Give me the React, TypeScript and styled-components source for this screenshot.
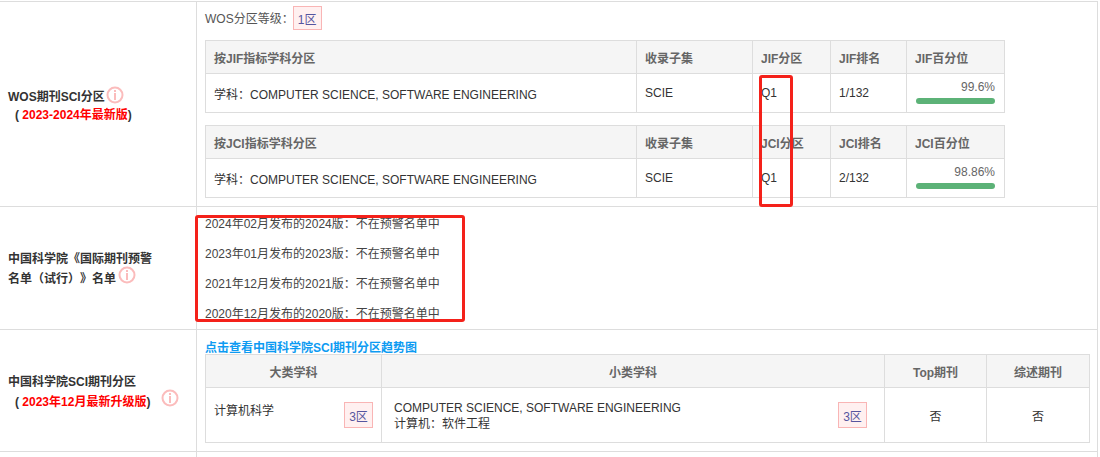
import React from "react";
import styled, { createGlobalStyle } from "styled-components";

const GlobalStyle = createGlobalStyle`
  html, body {
    margin: 0;
    padding: 0;
    background: #fff;
    overflow: hidden;
  }
  body {
    font-family: "Liberation Sans", "Noto Sans CJK SC", sans-serif;
    font-size: 12px;
    color: #333;
    text-spacing-trim: space-all;
  }
`;

const Page = styled.div`
  position: relative;
  width: 1100px;
  height: 457px;
  overflow: hidden;
  padding-top: 1px;
  box-sizing: border-box;
`;

const OuterTable = styled.table`
  width: 1099px;
  margin-left: -1px;
  border-collapse: collapse;
  table-layout: fixed;
  td {
    border: 1px solid #ddd;
  }
`;

const Row = styled.tr<{ h: number }>`
  height: ${({ h }) => h}px;
`;

const LabelCell = styled.td`
  box-sizing: border-box;
  padding: 2px 8px 0;
  font-weight: bold;
  line-height: 18px;
  color: #333;
  vertical-align: middle;
`;

const ContentCell = styled.td`
  padding: 0 8px;
  vertical-align: top;
`;

const Red = styled.span`
  color: #f00;
`;

const Indent = styled.span`
  padding-left: 7px;
`;

const Info = styled.svg<{ gap: number; lift: number }>`
  width: 18px;
  height: 18px;
  vertical-align: -3px;
  margin-left: ${({ gap }) => gap}px;
  transform: translateY(${({ lift }) => -lift}px);
`;

const InfoIcon = ({ gap, lift = 0 }: { gap: number; lift?: number }) => (
  <Info gap={gap} lift={lift} viewBox="0 0 18 18">
    <circle cx="9" cy="9" r="7.5" fill="none" stroke="#fbbcbc" strokeWidth="2" />
    <rect x="8" y="4" width="2" height="2" fill="#fbbcbc" />
    <rect x="8" y="7" width="2" height="7" fill="#fbbcbc" />
  </Info>
);

const GradeLine = styled.div`
  display: flex;
  align-items: center;
  height: 24px;
  margin-top: 4px;
  color: #555;
`;

const GradeLabel = styled.span`
  margin-top: -2px;
`;

const Tag = styled.span`
  display: inline-flex;
  align-items: center;
  justify-content: center;
  box-sizing: border-box;
  width: 29px;
  height: 26px;
  background: #fff0f0;
  border: 1px solid #f9b5b5;
  color: #55559f;
  flex: none;
`;

const GradeTag = styled(Tag)`
  margin-left: -1px;
  height: 24px;
`;

const DataTable = styled.table<{ mt: number; w: number; rowH: number }>`
  width: ${({ w }) => w}px;
  margin-top: ${({ mt }) => mt}px;
  border-collapse: collapse;
  table-layout: fixed;
  && td, && th {
    border: 1px solid #ddd;
    padding: 0 8px;
  }
  && th {
    height: 32px;
    background: #f5f5f5;
    color: #666;
    font-weight: bold;
    text-align: left;
  }
  && td {
    height: ${({ rowH }) => rowH}px;
    color: #333;
  }
`;

const CenterTh = styled.th`
  &&& {
    text-align: center;
  }
`;

const CenterTd = styled.td`
  text-align: center;
`;

const SubjectCell = styled.td`
  &&& {
    padding: 0 17px 0 12px;
  }
`;

const Percent = styled.div`
  text-align: right;
  color: #666;
  line-height: 14px;
  margin: -3px 1px 0 0;
`;

const Bar = styled.div`
  height: 6px;
  border-radius: 3px;
  background: #5cb277;
  margin: 4px 1px 0 1px;
`;

const WarnLine = styled.div`
  height: 30px;
  line-height: 30px;
  color: #444;
  &:first-child {
    margin-top: 2px;
  }
`;

const TrendLink = styled.a`
  display: block;
  margin-top: 10px;
  height: 13px;
  line-height: 16px;
  font-weight: bold;
  color: #0d9bf2;
`;

const SubjectWrap = styled.div`
  display: flex;
  align-items: center;
  justify-content: space-between;
`;

const SubjectName = styled.span`
  margin-top: -12px;
`;

const SubjectText = styled.div`
  line-height: 16px;
  margin-top: 1px;
`;

const Overlay = styled.div<{ l: number; t: number; w: number; h: number }>`
  position: absolute;
  left: ${({ l }) => l}px;
  top: ${({ t }) => t}px;
  width: ${({ w }) => w}px;
  height: ${({ h }) => h}px;
  box-sizing: border-box;
  border: 3px solid #f4211a;
  border-radius: 3px;
  pointer-events: none;
`;

const Quartile = ({
  name,
  rank,
  percent,
  mt,
}: {
  name: string;
  rank: string;
  percent: string;
  mt: number;
}) => (
  <DataTable mt={mt} w={799} rowH={38}>
    <colgroup>
      <col style={{ width: 431 }} />
      <col style={{ width: 116 }} />
      <col style={{ width: 78 }} />
      <col style={{ width: 76 }} />
      <col style={{ width: 98 }} />
    </colgroup>
    <thead>
      <tr>
        <th>按{name}指标学科分区</th>
        <th>收录子集</th>
        <th>{name}分区</th>
        <th>{name}排名</th>
        <th>{name}百分位</th>
      </tr>
    </thead>
    <tbody>
      <tr>
        <td>学科：COMPUTER SCIENCE, SOFTWARE ENGINEERING</td>
        <td>SCIE</td>
        <td>Q1</td>
        <td>{rank}</td>
        <td>
          <Percent>{percent}</Percent>
          <Bar />
        </td>
      </tr>
    </tbody>
  </DataTable>
);

export default function App() {
  return (
    <>
      <GlobalStyle />
      <Page>
        <OuterTable>
          <colgroup>
            <col style={{ width: 197 }} />
            <col />
          </colgroup>
          <tbody>
            <Row h={205}>
              <LabelCell>
                WOS期刊SCI分区
                <InfoIcon gap={1} />
                <br />
                <Indent>
                  ( <Red>2023-2024年最新版</Red>)
                </Indent>
              </LabelCell>
              <ContentCell>
                <GradeLine>
                  <GradeLabel>WOS分区等级：</GradeLabel>
                  <GradeTag>1区</GradeTag>
                </GradeLine>
                <Quartile name="JIF" rank="1/132" percent="99.6%" mt={10} />
                <Quartile name="JCI" rank="2/132" percent="98.86%" mt={12} />
              </ContentCell>
            </Row>
            <Row h={123}>
              <LabelCell>
                中国科学院《国际期刊预警
                <br />
                名单（试行）》名单
                <InfoIcon gap={2} lift={2} />
              </LabelCell>
              <ContentCell>
                <WarnLine>2024年02月发布的2024版：不在预警名单中</WarnLine>
                <WarnLine>2023年01月发布的2023版：不在预警名单中</WarnLine>
                <WarnLine>2021年12月发布的2021版：不在预警名单中</WarnLine>
                <WarnLine>2020年12月发布的2020版：不在预警名单中</WarnLine>
              </ContentCell>
            </Row>
            <Row h={122}>
              <LabelCell>
                中国科学院SCI期刊分区
                <br />
                <Indent>
                  ( <Red>2023年12月最新升级版</Red>)
                </Indent>
                <InfoIcon gap={11} lift={2} />
              </LabelCell>
              <ContentCell>
                <TrendLink>点击查看中国科学院SCI期刊分区趋势图</TrendLink>
                <DataTable mt={1} w={884} rowH={54}>
                  <colgroup>
                    <col style={{ width: 176 }} />
                    <col style={{ width: 503 }} />
                    <col style={{ width: 102 }} />
                    <col style={{ width: 103 }} />
                  </colgroup>
                  <thead>
                    <tr>
                      <CenterTh>大类学科</CenterTh>
                      <CenterTh>小类学科</CenterTh>
                      <CenterTh>Top期刊</CenterTh>
                      <CenterTh>综述期刊</CenterTh>
                    </tr>
                  </thead>
                  <tbody>
                    <tr>
                      <td>
                        <SubjectWrap>
                          <SubjectName>计算机科学</SubjectName>
                          <Tag>3区</Tag>
                        </SubjectWrap>
                      </td>
                      <SubjectCell>
                        <SubjectWrap>
                          <SubjectText>
                            COMPUTER SCIENCE, SOFTWARE ENGINEERING
                            <br />
                            计算机：软件工程
                          </SubjectText>
                          <Tag>3区</Tag>
                        </SubjectWrap>
                      </SubjectCell>
                      <CenterTd>否</CenterTd>
                      <CenterTd>否</CenterTd>
                    </tr>
                  </tbody>
                </DataTable>
              </ContentCell>
            </Row>
            <Row h={20}>
              <LabelCell />
              <ContentCell />
            </Row>
          </tbody>
        </OuterTable>
        <Overlay l={759} t={75} w={34} h={132} />
        <Overlay l={195} t={215} w={270} h={107} />
      </Page>
    </>
  );
}
